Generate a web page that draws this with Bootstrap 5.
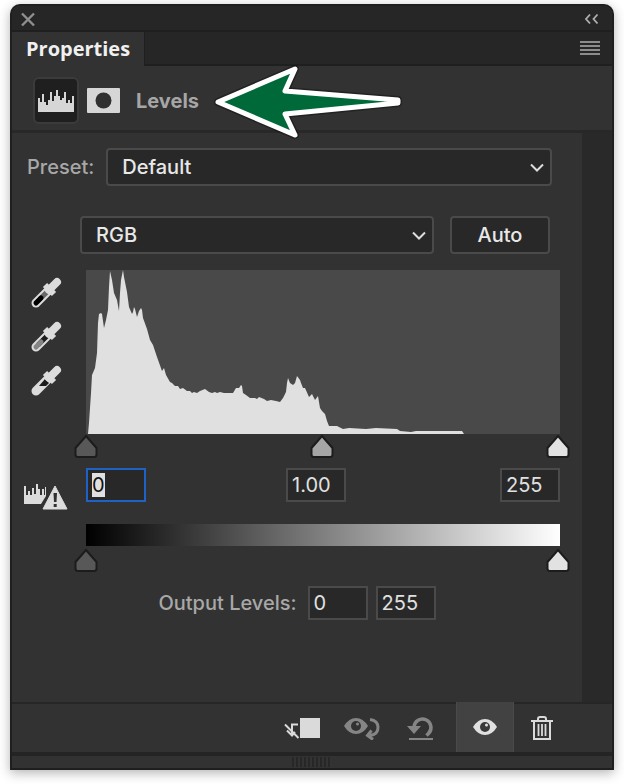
<!DOCTYPE html>
<html lang="en" data-bs-theme="dark">
<head>
<meta charset="utf-8">
<meta name="viewport" content="width=device-width, initial-scale=1">
<title>Properties</title>
<link href="https://cdn.jsdelivr.net/npm/bootstrap@5.3.0/dist/css/bootstrap.min.css" rel="stylesheet">
<style>
  body { background: #fff; color: #e6e6e6; font: 400 20px/26px Inter, "Liberation Sans", sans-serif; padding: 4px 10px 14px; }
  svg { display: block; flex: none; }
  .panel { background: #323232; border: 2px solid #1f1f1f; border-radius: 10px 10px 0 0; box-shadow: 0 3px 12px rgba(0,0,0,.3); }
  .plain { background: none; border: 0; padding: 0; color: inherit; }
  .titlebar { background: #262626; border-bottom: 2px solid #1f1f1f; border-radius: 8px 8px 0 0; height: 26px; padding: 2px 13px 0 8px; }
  .tabbar { background: #262626; height: 34px; padding-right: 12px; }
  .tab { background: #323232; color: #f0f0f0; font: 700 20px/34px "Open Sans", "Noto Sans", sans-serif; padding: 0 14px; height: 34px; }
  .tabfill { border-bottom: 2px solid #1f1f1f; border-left: 1px solid #1f1f1f; height: 34px; margin-right: -12px; padding-right: 12px; }
  .kind { height: 67px; border-bottom: 3px solid #282828; padding: 5px 0 0 21px; color: #d6d6d6; }
  .kind-on { width: 46px; height: 47px; background: #1f1f1f; border: 2px solid #3b3b3b; border-radius: 6px; }
  .kind h1 { font-size: 20px; line-height: 26px; font-weight: 700; color: #a6a6a6; margin-left: 16px; }
  .pointer { margin: -6px 0 -6px 14px; }
  .gutter { width: 30px; background: #292929; }
  .settings { padding: 15px 12px 0 0; }
  .dim { color: #a8a8a8; font-weight: 500; }
  .pick, .auto { height: 38px; border: 2px solid #4a4a4a; border-radius: 4px; background-color: #282828; color: #e8e8e8; font-size: 20px; line-height: 26px; font-weight: 500; }
  .pick { padding: 4px 36px 4px 14px; background-position: right 6px center; background-size: 14px 9px;
    background-image: url("data:image/svg+xml,%3Csvg xmlns='http://www.w3.org/2000/svg' viewBox='0 0 14 9'%3E%3Cpath d='M1 1.5l6 6 6-6' fill='none' stroke='%23ddd' stroke-width='2'/%3E%3C/svg%3E"); }
  .auto { width: 100px; }
  .preset { padding: 0 18px 0 15px; margin-bottom: 30px; }
  .levels { display: grid; grid-template-columns: 62px minmax(0, 1fr); }
  .channel { padding: 0 20px 0 6px; gap: 16px; margin-bottom: 16px; }
  .inset { margin: 0 10px 0 12px; }
  .hist { background: #494949; width: auto; height: 164px; fill: #e0e0e0; }
  .droppers { padding: 1px 0 0 18px; }
  .droppers button { height: 44px; width: 34px; }
  .stack { display: grid; height: 24px; }
  .stack input { grid-area: 1 / 1; -webkit-appearance: none; appearance: none; background: none; width: 100%; height: 24px; margin: 0; pointer-events: none; }
  .stack input::-webkit-slider-thumb { -webkit-appearance: none; width: 24px; height: 24px; pointer-events: auto; background: var(--knob); }
  .stack input::-moz-range-thumb { border: 0; width: 24px; height: 24px; pointer-events: auto; background: var(--knob); }
  .k-dark { --knob: url("data:image/svg+xml,%3Csvg xmlns='http://www.w3.org/2000/svg' viewBox='0 0 24 24'%3E%3Cpath d='M12 2L22.500 14v6.500a2.500 2.500 0 0 1-2.500 2.500h-16a2.500 2.500 0 0 1-2.500-2.500V14z' fill='%23585858' stroke='%231c1c1c' stroke-width='2'/%3E%3C/svg%3E"); }
  .k-mid { --knob: url("data:image/svg+xml,%3Csvg xmlns='http://www.w3.org/2000/svg' viewBox='0 0 24 24'%3E%3Cpath d='M12 2L22.500 14v6.500a2.500 2.500 0 0 1-2.500 2.500h-16a2.500 2.500 0 0 1-2.500-2.500V14z' fill='%23a6a6a6' stroke='%231c1c1c' stroke-width='2'/%3E%3C/svg%3E"); }
  .k-light { --knob: url("data:image/svg+xml,%3Csvg xmlns='http://www.w3.org/2000/svg' viewBox='0 0 24 24'%3E%3Cpath d='M12 2L22.500 14v6.500a2.500 2.500 0 0 1-2.500 2.500h-16a2.500 2.500 0 0 1-2.500-2.500V14z' fill='%23e2e2e2' stroke='%231c1c1c' stroke-width='2'/%3E%3C/svg%3E"); }
  .num { width: 60px; height: 34px; border: 2px solid #4a4a4a; border-radius: 0; background: #282828; color: #e0e0e0; padding: 0 4px; font-size: 20px; line-height: 26px; }
  .num:focus { border-color: #1d62c4; background: #282828; box-shadow: none; outline: 0; color: #e0e0e0; }
  .num::selection { background: #e0e0e0; color: #111; }
  .inputs { margin-top: 10px; margin-bottom: 22px; }
  .midtone { margin-right: 14px; }
  .warn { margin: 26px 0 0 12px; }
  .ramp { height: 22px; background: linear-gradient(90deg, #000, #fff); margin-bottom: 2px; }
  .output { margin-top: 14px; padding-left: 12px; gap: 8px; }
  .output label { margin-right: 3px; }
  .actions { border-top: 2px solid #262626; height: 50px; padding-right: 42px; color: #dadada; }
  .actions button { width: 60px; height: 48px; }
  .actions .slim { width: 56px; }
  .actions .off { color: #858585; }
  .actions .shown { width: 58px; height: 50px; margin-top: -2px; background: #424242; border: solid #4a4a4a; border-width: 0 1px; }
  .gripbar { border-top: 4px solid #242424; height: 16px; }
  .grip { width: 40px; height: 10px; background: repeating-linear-gradient(90deg, #272727 0 2px, #333 2px 4px); }
</style>
</head>
<body class="min-vh-100 d-flex flex-column">
<main class="panel flex-fill d-flex flex-column">
  <div class="titlebar d-flex align-items-center justify-content-between">
    <button class="plain" type="button" aria-label="Close panel"><svg width="16" height="16" viewBox="0 0 16 16" fill="none" stroke="#8f8f8f" stroke-width="2.400"><path d="M2 2.500l12 12M14 2.500l-12 12"/></svg></button>
    <button class="plain" type="button" aria-label="Collapse panel"><svg width="15" height="12" viewBox="0 0 15 12" fill="none" stroke="#b0b0b0" stroke-width="1.800"><path d="M6 1.500L2 6l4 4.500M13.500 1.500l-4 4.500 4 4.500"/></svg></button>
  </div>
  <div class="tabbar d-flex">
    <button class="plain tab" type="button">Properties</button>
    <div class="tabfill flex-fill d-flex align-items-center justify-content-end">
      <button class="plain" type="button" aria-label="Panel menu"><svg width="20" height="14" viewBox="0 0 20 14" fill="#8c8c8c"><path d="M0 0h20v2H0zM0 4h20v2H0zM0 8h20v2H0zM0 12h20v2H0z"/></svg></button>
    </div>
  </div>
  <header class="kind d-flex align-items-center">
    <button class="plain kind-on d-flex align-items-center justify-content-center" type="button" aria-label="Adjustment"><svg width="36" height="22" viewBox="0 0 36 22" fill="currentColor"><path d="M0 22V8h2v4h2V4h2v8h2v3h2v-5h2V2h2v9h2V6h2V0h2v6h2v4h2V8h2V2h2v11h2v-3h2v3h2V6h2v16z"/></svg></button>
    <button class="plain ms-2" type="button" aria-label="Layer mask"><svg width="33" height="25" viewBox="0 0 33 25"><rect width="33" height="25" rx="1" fill="currentColor"/><circle cx="16.500" cy="12.500" r="8" fill="#303030"/></svg></button>
    <h1 class="mb-0">Levels</h1>
    <svg class="pointer position-relative" width="190" height="76" viewBox="0 0 190 76"><path d="M5 39L82 6 72 28 185 37V40L72 51 82 72z" fill="#000" opacity=".3" stroke="#000" stroke-width="8" stroke-linejoin="round"/><path d="M5 39L82 6 72 28 185 37V40L72 51 82 72z" fill="#00693a" stroke="#fff" stroke-width="5" stroke-linejoin="round"/></svg>
  </header>
  <div class="flex-fill d-flex">
    <section class="settings flex-fill">
      <div class="preset d-flex align-items-center">
        <label class="dim me-2 pe-1" for="preset">Preset:</label>
        <select class="form-select pick" id="preset"><option>Default</option></select>
      </div>
      <div class="levels">
        <div></div>
        <div class="channel d-flex">
          <select class="form-select pick" aria-label="Channel"><option>RGB</option></select>
          <button class="btn auto p-0 flex-shrink-0" type="button">Auto</button>
        </div>
        <div class="droppers d-flex flex-column">
          <button class="plain" type="button" aria-label="Sample black point"><svg width="32" height="32" viewBox="0 0 32 32" fill="none" stroke="#dcdcdc"><path d="M6 26L18 14" stroke-width="9" stroke-linecap="round"/><path d="M6 26L18 14" stroke="#686868" stroke-width="5"/><path d="M6 26l5-5" stroke="#000" stroke-width="5" stroke-linecap="round"/><path d="M19 13l8-8" stroke-width="8" stroke-linecap="round"/><path d="M15 8l9 9" stroke-width="6"/></svg></button>
          <button class="plain" type="button" aria-label="Sample gray point"><svg width="32" height="32" viewBox="0 0 32 32" fill="none" stroke="#dcdcdc"><path d="M6 26L18 14" stroke-width="9" stroke-linecap="round"/><path d="M8 24L18 14" stroke="#1c1c1c" stroke-width="5"/><path d="M6 26l5-5" stroke="#858585" stroke-width="5" stroke-linecap="round"/><path d="M19 13l8-8" stroke-width="8" stroke-linecap="round"/><path d="M15 8l9 9" stroke-width="6"/></svg></button>
          <button class="plain" type="button" aria-label="Sample white point"><svg width="32" height="32" viewBox="0 0 32 32" fill="none" stroke="#dcdcdc"><path d="M6 26L18 14" stroke-width="9" stroke-linecap="round"/><path d="M9 21h7l3-3-4-4z" fill="#1c1c1c" stroke="none"/><path d="M19 13l8-8" stroke-width="8" stroke-linecap="round"/><path d="M15 8l9 9" stroke-width="6"/></svg></button>
        </div>
        <div>
          <div class="inset"><svg class="hist w-100" viewBox="0 0 474 164" preserveAspectRatio="none" role="img" aria-label="Histogram"><path d="M2 164L3 153 5 123 6 105 9 98 11 83 12 53 13 44 15 43 16 44 18 58 20 50 22 40 23 17 24 1 26 10 28 23 31 30 33 41 34 23 35 10 37 0 38 7 41 22 43 37 46 44 47 42 48 37 49 39 51 47 53 41 55 38 56 40 57 48 61 59 64 70 67 75 71 87 76 101 78 98 80 105 84 112 86 113 89 116 92 116 94 119 97 118 101 121 104 121 106 123 108 122 111 123 114 121 119 119 123 122 126 123 129 122 131 123 134 122 138 123 147 123 150 118 153 118 155 115 156 116 157 123 160 125 164 128 169 128 171 129 173 127 178 129 181 131 185 130 190 131 194 132 197 128 200 122 201 113 202 108 204 113 207 115 209 113 211 106 214 110 215 113 217 118 219 118 223 127 226 124 229 130 232 126 234 138 236 141 239 144 241 151 243 156 251 156 257 159 263 158 280 159 290 158 311 159 314 161 325 162 330 161 376 161 378 164z"/></svg></div>
          <div class="stack">
            <input class="k-dark" type="range" min="0" max="255" value="0" aria-label="Shadow input">
            <input class="k-mid" type="range" min="0" max="100" value="50" aria-label="Midtone input">
            <input class="k-light" type="range" min="0" max="255" value="255" aria-label="Highlight input">
          </div>
        </div>
        <svg class="warn" width="44" height="26" viewBox="0 0 44 26" fill="#dcdcdc" role="img" aria-label="Uncached histogram"><path d="M0 20V2h2v9h2V7h2v4h2V4h2v6h2V0h2v5h2v6h2V5h2v6h1V3h1v9l-5 8z"/><path d="M31 2l12 23H19z" stroke="#dcdcdc" stroke-width="1" stroke-linejoin="round"/><path d="M29.500 9h3.500l-.5 9h-2.500zM29.700 20h3v3h-3z" fill="#303030"/></svg>
        <div class="inputs inset d-flex justify-content-between">
          <input class="num" id="shadow" type="text" value="0" aria-label="Shadow level" autofocus>
          <input class="num midtone" type="text" value="1.00" aria-label="Midtone level">
          <input class="num" type="text" value="255" aria-label="Highlight level">
        </div>
        <div></div>
        <div>
          <div class="ramp inset"></div>
          <div class="stack">
            <input class="k-dark" type="range" min="0" max="255" value="0" aria-label="Shadow output">
            <input class="k-light" type="range" min="0" max="255" value="255" aria-label="Highlight output">
          </div>
        </div>
      </div>
      <div class="output d-flex align-items-center justify-content-center">
        <label class="dim" for="outlow">Output Levels:</label>
        <input class="num" id="outlow" type="text" value="0">
        <input class="num" type="text" value="255" aria-label="Output highlight level">
      </div>
    </section>
    <div class="gutter"></div>
  </div>
  <footer class="actions d-flex justify-content-end">
    <button class="plain d-flex align-items-center justify-content-center" type="button" aria-label="Clip to layer"><svg width="36" height="24" viewBox="0 0 36 24"><path d="M16 2h20v20H16z" fill="currentColor"/><path d="M14 8.500H8V19M3 14.500l5 5 3-3.500M1 8.500L14.500 22" fill="none" stroke="currentColor" stroke-width="2"/></svg></button>
    <button class="plain off d-flex align-items-center justify-content-center" type="button" aria-label="View previous state"><svg width="36" height="24" viewBox="0 0 36 24"><path d="M0 10Q5 2 12 2t12 8q-5 8-12 8T0 10z" fill="currentColor"/><circle cx="12" cy="10" r="5" fill="#323232"/><circle cx="13.500" cy="8" r="1.500" fill="currentColor"/><path d="M26 3.500q8 1 8 8t-8 8M27.500 14.500L23.500 19.500l5.500 4" fill="none" stroke="currentColor" stroke-width="3"/></svg></button>
    <button class="plain off slim me-2 d-flex align-items-center justify-content-center" type="button" aria-label="Reset"><svg width="27" height="26" viewBox="0 0 27 26"><path d="M2 23h24v2H2z" fill="currentColor"/><path d="M7 12a8.500 8.500 0 1 1 14.500 6.500l-2 2" fill="none" stroke="currentColor" stroke-width="3.500"/><path d="M0 11h14l-7 8z" fill="currentColor"/></svg></button>
    <button class="plain shown d-flex align-items-center justify-content-center" type="button" aria-label="Toggle visibility"><svg width="24" height="18" viewBox="0 0 24 18"><path d="M0 9Q5 1 12 1t12 8q-5 8-12 8T0 9z" fill="#e0e0e0"/><circle cx="12" cy="9" r="5" fill="#3a3a3a"/><circle cx="13.500" cy="7" r="1.500" fill="#e0e0e0"/></svg></button>
    <button class="plain slim d-flex align-items-center justify-content-center" type="button" aria-label="Delete"><svg width="22" height="26" viewBox="0 0 22 26" fill="none" stroke="currentColor" stroke-width="2"><path d="M0 6h22M7 6V4q0-2 2-2h4q2 0 2 2v2M3 6v18h16V6"/><path d="M7.500 9v12M11 9v12M14.500 9v12" stroke-width="1.800"/></svg></button>
  </footer>
  <div class="gripbar d-flex align-items-center justify-content-center"><div class="grip"></div></div>
</main>
<script src="https://cdn.jsdelivr.net/npm/bootstrap@5.3.0/dist/js/bootstrap.bundle.min.js"></script>
<script>
  const shadow = document.getElementById('shadow');
  shadow.focus();
  shadow.select();
</script>
</body>
</html>
